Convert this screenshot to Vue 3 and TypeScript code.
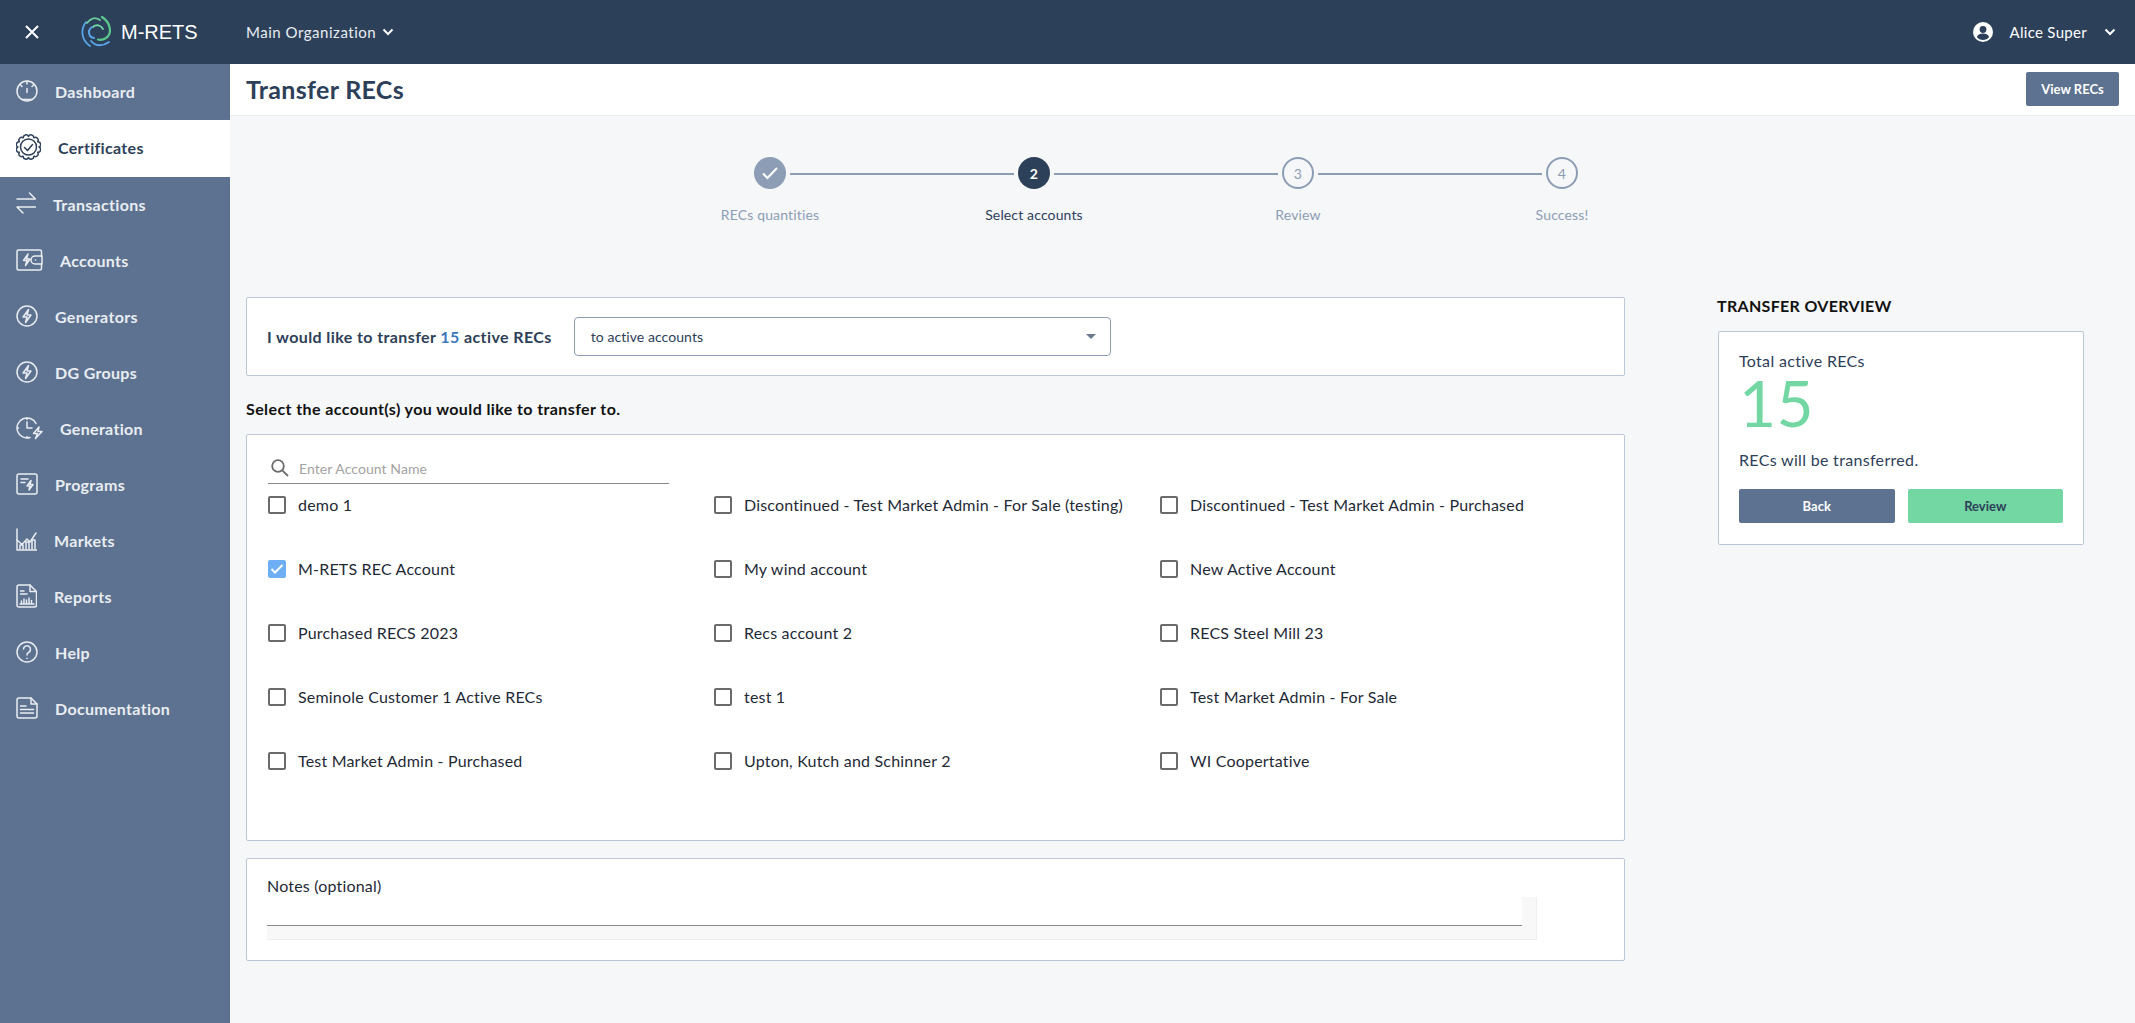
<template>
  <div class="app">
    <header class="topbar">
      <svg class="close" width="16" height="16" viewBox="0 0 16 16"><path d="M2 2 14 14M14 2 2 14" stroke="#fff" stroke-width="2" fill="none" /></svg>
      <div class="brand">
        <svg width="32" height="32" viewBox="0 0 32 32" fill="none" stroke-linecap="round">
          <path d="M6 7C10 2 15 1 19 4" stroke="#6fd6a0" stroke-width="1.800" />
          <path d="M21 1C29 6 32 17 25 22C22 24 19 24 17 23.500" stroke="#5cc98e" stroke-width="2.200" />
          <path d="M12 11C15 8 20 9 22 13" stroke="#6fd6a0" stroke-width="1.800" />
          <path d="M5 6C-0.500 13 0 24 9 30" stroke="#58a5e8" stroke-width="1.800" />
          <path d="M11 11C8 13 7 16 9 20C10 21 11 22 13 22" stroke="#58a5e8" stroke-width="2" />
          <path d="M10 25C14 30 21 31 28 26" stroke="#58a5e8" stroke-width="2" />
        </svg>
        <span class="brand-name">M-RETS</span>
      </div>
      <div class="org">Main Organization <svg class="chev" width="12" height="8" viewBox="0 0 12 8"><path d="M1.500 1.500 6 6l4.500-4.500" stroke="#fff" stroke-width="2" fill="none" /></svg></div>
      <div class="user">
        <svg width="20" height="20" viewBox="0 0 20 20"><circle cx="10" cy="10" r="10" fill="#fff" /><circle cx="10" cy="7.500" r="3.400" fill="#2d4059" /><path d="M3.800 15c1.200-2.400 3.600-3.400 6.200-3.400s5 1 6.200 3.400C14.700 17 12.500 18 10 18s-4.700-1-6.200-3z" fill="#2d4059" /></svg>
        <span>Alice Super</span>
        <svg class="chev" width="12" height="8" viewBox="0 0 12 8"><path d="M1.500 1.500 6 6l4.500-4.500" stroke="#fff" stroke-width="2" fill="none" /></svg>
      </div>
    </header>

    <div class="layout">
      <nav class="sidebar">
        <a v-for="item in navItems" :key="item.label" class="nav-item" :class="{ active: item.label === 'Certificates' }">
          <svg :width="item.w" height="26" :viewBox="`0 0 ${item.w} 26`" fill="none" stroke="currentColor" stroke-width="1.500" stroke-linecap="round" stroke-linejoin="round">
            <path v-for="d in item.paths" :key="d" :d="d" />
          </svg>
          <span>{{ item.label }}</span>
        </a>
      </nav>

      <main class="main">
        <div class="titlebar">
          <h1>Transfer RECs</h1>
          <button class="btn btn-slate view-btn">View RECs</button>
        </div>

        <ol class="steps">
          <li v-for="(step, i) in steps" :key="step" class="step" :class="stepClass(i)">
            <span class="bubble">
              <svg v-if="i === 0" width="18" height="14" viewBox="0 0 18 14"><path d="M2 7.500 6.500 12 16 2" stroke="#fff" stroke-width="2" fill="none" /></svg>
              <template v-else>{{ i + 1 }}</template>
            </span>
            <span class="step-label">{{ step }}</span>
          </li>
        </ol>

        <div class="columns">
          <section class="left">
            <div class="card transfer-row">
              <span class="lead">I would like to transfer <em>15</em> active RECs</span>
              <div class="select">
                <span>to active accounts</span>
                <i class="caret"></i>
              </div>
            </div>

            <h2 class="pick-title">Select the account(s) you would like to transfer to.</h2>

            <div class="card accounts">
              <div class="search">
                <svg width="20" height="20" viewBox="0 0 20 20" fill="none" stroke="#6b6b6b" stroke-width="1.800"><circle cx="8" cy="8" r="5.800" /><path d="M12.300 12.300 18 18" /></svg>
                <span>Enter Account Name</span>
              </div>
              <div class="account-grid">
                <label v-for="name in accounts" :key="name" class="account">
                  <span class="box" :class="{ checked: name === selected }">
                    <svg v-if="name === selected" width="14" height="12" viewBox="0 0 14 12"><path d="M1.500 6 5 9.500 12.500 2" stroke="#fff" stroke-width="2" fill="none" /></svg>
                  </span>
                  {{ name }}
                </label>
              </div>
            </div>

            <div class="card notes">
              <div class="notes-label">Notes (optional)</div>
              <div class="notes-field"><div class="notes-input"></div></div>
            </div>
          </section>

          <aside class="right">
            <h3>TRANSFER OVERVIEW</h3>
            <div class="card overview">
              <div class="ov-label">Total active RECs</div>
              <div class="ov-num">15</div>
              <div class="ov-note">RECs will be transferred.</div>
              <div class="ov-actions">
                <button class="btn btn-slate">Back</button>
                <button class="btn btn-green">Review</button>
              </div>
            </div>
          </aside>
        </div>
      </main>
    </div>
  </div>
</template>

<script setup lang="ts">
  type NavItem = { label: string; w: number; paths: string[] };

  // scalloped edge of the certificate badge
  function scallop(cx: number, cy: number, r: number, bumps: number): string {
    let d = "";
    for (let i = 0; i <= bumps; i++) {
      const a = (i / bumps) * Math.PI * 2;
      const x = (cx + r * Math.cos(a)).toFixed(2);
      const y = (cy + r * Math.sin(a)).toFixed(2);
      d += i === 0 ? `M${x} ${y}` : `A2.800 2.800 0 0 1 ${x} ${y}`;
    }
    return d + "Z";
  }

  const circle = "M21 13A10 10 0 1 1 1 13A10 10 0 1 1 21 13Z";

  const navItems: NavItem[] = [
    { label: "Dashboard", w: 22, paths: [circle, "M11 3V6M4 6.500 6 8.500M18 6.500 16 8.500M11 10.500V14.500M6 21.500H16"] },
    { label: "Certificates", w: 25, paths: [scallop(12.5, 13, 10.6, 12), "M20.500 13A8 8 0 1 1 4.500 13A8 8 0 1 1 20.500 13Z", "M8.500 13.500 11.500 16.500 16.500 10.500"] },
    { label: "Transactions", w: 20, paths: ["M1 8H19.500L13.500 2", "M19.500 16H1L7 22"] },
    { label: "Accounts", w: 27, paths: ["M25.500 9V4.500A1.500 1.500 0 0 0 24 3H2.500A1.500 1.500 0 0 0 1 4.500V21.500A1.500 1.500 0 0 0 2.500 23H24A1.500 1.500 0 0 0 25.500 21.500V17", "M26 9H19A4 4 0 0 0 19 17H26Z", "M12 7 7.500 13.500H11L9.500 18.500 14 12H10.500Z", "M19.500 13H19.600"] },
    { label: "Generators", w: 22, paths: [circle, "M12.500 6.500 7 14H11L9.500 19.500 15 12H11Z"] },
    { label: "DG Groups", w: 22, paths: [circle, "M12.500 6.500 7 14H11L9.500 19.500 15 12H11Z"] },
    { label: "Generation", w: 27, paths: ["M20 8.500A10 10 0 1 0 14 22.500M11 3V4.500M11 21.500V23M1 13H2.500M11 7V13H16", "M23 12 17.500 18.500H21.500L19.500 23.500 26 16.500H22Z"] },
    { label: "Programs", w: 22, paths: ["M3 3H19A2 2 0 0 1 21 5V21A2 2 0 0 1 19 23H3A2 2 0 0 1 1 21V5A2 2 0 0 1 3 3Z", "M5 8H12M5 11.500H9", "M15 9.500 11 15H14L13 19 17 13.500H14Z"] },
    { label: "Markets", w: 21, paths: ["M1 2V23H21", "M1 13 6 17.500 11 12 14 15 20 6", "M4 22V18H7V22M10 22V15H13V22M16 22V13H19V22"] },
    { label: "Reports", w: 21, paths: ["M3 2H14L20.500 8.500V22A2 2 0 0 1 18.500 24H3A2 2 0 0 1 1 22V4A2 2 0 0 1 3 2Z", "M14 2V8.500H20.500", "M4.500 8H8M4.500 11H11", "M4 21H18M5.500 21V18M8 21V16M10.500 21V17M13 21V15M15.500 21V17.500"] },
    { label: "Help", w: 22, paths: [circle, "M7.500 10A3.500 3.500 0 1 1 12.500 13.500C11.500 14 11 15 11 16", "M11 19.300V19.400"] },
    { label: "Documentation", w: 22, paths: ["M3 3H15L21 9V21A2 2 0 0 1 19 23H3A2 2 0 0 1 1 21V5A2 2 0 0 1 3 3Z", "M15 3V9H21", "M4.500 11H10M4.500 14.500H17.500M4.500 18H17.500"] },
  ];

  const steps = ["RECs quantities", "Select accounts", "Review", "Success!"];

  function stepClass(i: number) {
    if (i === 0) return "done";
    return i === 1 ? "current" : "todo";
  }

  const selected = "M-RETS REC Account";
  const accounts = [
    "demo 1",
    "Discontinued - Test Market Admin - For Sale (testing)",
    "Discontinued - Test Market Admin - Purchased",
    "M-RETS REC Account",
    "My wind account",
    "New Active Account",
    "Purchased RECS 2023",
    "Recs account 2",
    "RECS Steel Mill 23",
    "Seminole Customer 1 Active RECs",
    "test 1",
    "Test Market Admin - For Sale",
    "Test Market Admin - Purchased",
    "Upton, Kutch and Schinner 2",
    "WI Coopertative",
  ];
</script>

<style>
  html, body {
    margin: 0;
    background: #f6f7f9;
  }
</style>

<style scoped>
  .app {
    font-family: Lato, "Noto Sans", sans-serif;
    font-size: 16px;
    letter-spacing: 0.02em;
    color: #2d4059;
    height: 1023px;
    overflow: hidden;
  }

  .topbar {
    height: 64px;
    background: #2d4059;
    color: #fff;
    display: flex;
    align-items: center;
    padding-left: 24px;
  }

  .close {
    margin-right: 41px;
  }

  .brand {
    display: flex;
    align-items: center;
    gap: 8px;
    width: 165px;
  }

  .brand-name {
    font-family: "Liberation Sans", sans-serif;
    font-size: 20px;
    letter-spacing: 0;
  }

  .org {
    display: flex;
    align-items: center;
    gap: 6px;
    font-size: 15px;
    letter-spacing: 0.035em;
    color: #e8edf3;
  }

  .user {
    margin-left: auto;
    margin-right: 19px;
    display: flex;
    align-items: center;
    gap: 17px;
    font-size: 15px;
    letter-spacing: 0.02em;
  }

  .layout {
    display: flex;
    height: 959px;
  }

  .sidebar {
    width: 230px;
    flex: none;
    background: #5d7290;
  }

  .nav-item {
    height: 56px;
    box-sizing: border-box;
    padding: 0 0 2px 16px;
    display: flex;
    align-items: center;
    gap: 17px;
    color: #e9edf2;
    font-weight: 700;
    font-size: 16px;
  }

  .nav-item svg {
    flex: none;
    margin-top: -1px;
  }

  .nav-item.active {
    background: #fff;
    color: #2d4059;
    height: 57px;
  }

  .main {
    flex: 1;
    min-width: 0;
  }

  .titlebar {
    height: 52px;
    box-sizing: border-box;
    background: #fff;
    border-bottom: 1px solid #e8ebef;
    display: flex;
    align-items: center;
    justify-content: space-between;
    padding: 0 16px 2px;
  }

  h1 {
    margin: 0;
    font-size: 25px;
    font-weight: 700;
  }

  .btn {
    border: 0;
    border-radius: 2px;
    font: inherit;
    font-size: 13px;
    font-weight: 700;
    height: 34px;
  }

  .btn-slate {
    background: #5d7290;
    color: #fff;
  }

  .btn-green {
    background: #72d7a2;
    color: #2d4059;
  }

  .view-btn {
    width: 93px;
  }

  .steps {
    list-style: none;
    margin: 0 0 0 408px;
    padding: 41px 0 0;
    width: 1056px;
    height: 140px;
    box-sizing: content-box;
    display: grid;
    grid-template-columns: repeat(4, 1fr);
  }

  .step {
    position: relative;
    display: flex;
    flex-direction: column;
    align-items: center;
    gap: 17px;
    font-size: 14px;
    letter-spacing: 0.01em;
  }

  .step:not(:last-child)::after {
    content: "";
    position: absolute;
    top: 16px;
    left: calc(50% + 20px);
    width: 224px;
    height: 2px;
    background: #8c9db5;
  }

  .bubble {
    width: 32px;
    height: 32px;
    border-radius: 50%;
    box-sizing: border-box;
    display: flex;
    align-items: center;
    justify-content: center;
    font-size: 14px;
  }

  .done .bubble {
    background: #8c9db5;
  }

  .current .bubble {
    background: #2d4059;
    color: #fff;
    font-weight: 700;
  }

  .todo .bubble {
    border: 2px solid #8c9db5;
    color: #8c9db5;
  }

  .done .step-label,
  .todo .step-label {
    color: #8c9db5;
  }

  .columns {
    display: flex;
    padding-left: 16px;
    gap: 93px;
  }

  .left {
    width: 1379px;
    flex: none;
  }

  .card {
    background: #fff;
    border: 1px solid #bcc6d6;
    border-radius: 2px;
    box-sizing: border-box;
  }

  .transfer-row {
    height: 79px;
    display: flex;
    align-items: center;
    padding-left: 20px;
    gap: 22px;
  }

  .lead {
    font-weight: 700;
    letter-spacing: 0.025em;
  }

  .lead em {
    font-style: normal;
    color: #3b78bd;
  }

  .select {
    width: 537px;
    height: 39px;
    box-sizing: border-box;
    border: 1px solid #8c9db5;
    border-radius: 4px;
    display: flex;
    align-items: center;
    justify-content: space-between;
    padding: 0 14px 0 16px;
    font-size: 14px;
    letter-spacing: 0.005em;
  }

  .caret {
    width: 0;
    height: 0;
    border-left: 5px solid transparent;
    border-right: 5px solid transparent;
    border-top: 5px solid #6b7a8f;
  }

  .pick-title {
    margin: 23px 0 15px;
    font-size: 16px;
    line-height: 20px;
    font-weight: 700;
    letter-spacing: 0.025em;
    color: #111;
  }

  .accounts {
    height: 407px;
    padding: 20px 21px 0;
  }

  .search {
    width: 401px;
    height: 29px;
    border-bottom: 1px solid #8a8a8a;
    display: flex;
    align-items: center;
    gap: 9px;
    color: #a3a3a3;
    font-size: 14px;
    letter-spacing: 0.005em;
    padding: 0 0 2px 2px;
    box-sizing: border-box;
  }

  .account-grid {
    display: grid;
    grid-template-columns: repeat(3, 446px);
    grid-auto-rows: 64px;
    margin-top: 9px;
  }

  .account {
    display: flex;
    align-items: flex-start;
    gap: 12px;
    height: 24px;
    line-height: 24px;
    color: #1f2a37;
    font-size: 16px;
    letter-spacing: 0.012em;
  }

  .box {
    width: 18px;
    height: 18px;
    margin-top: 3px;
    box-sizing: border-box;
    border: 2px solid #6b6b6b;
    border-radius: 2px;
    flex: none;
    display: flex;
    align-items: center;
    justify-content: center;
  }

  .box.checked {
    background: #6eaef5;
    border-color: #6eaef5;
  }

  .notes {
    margin-top: 17px;
    height: 103px;
    padding: 16px 20px 0;
  }

  .notes-label {
    font-size: 16px;
    line-height: 22px;
    letter-spacing: 0.012em;
    color: #1f2a37;
  }

  .notes-field {
    width: 1270px;
    height: 43px;
    background: #f8f8f8;
    border-right: 1px solid #efefef;
    border-bottom: 1px solid #efefef;
    box-sizing: border-box;
  }

  .notes-input {
    width: 1255px;
    height: 28px;
    background: #fff;
    border-bottom: 1px solid #8a8a8a;
  }

  .right {
    width: 366px;
    flex: none;
  }

  .right h3 {
    margin: -4px 0 13px -1px;
    line-height: 25px;
    font-size: 16px;
    font-weight: 700;
    color: #111;
  }

  .overview {
    height: 214px;
    padding: 17px 20px 0;
  }

  .ov-label {
    line-height: 24px;
  }

  .ov-num {
    font-size: 64px;
    line-height: 60px;
    font-weight: 400;
    color: #72d7a2;
  }

  .ov-note {
    margin-top: 15px;
    line-height: 24px;
  }

  .ov-actions {
    display: flex;
    gap: 13px;
    margin-top: 17px;
  }

  .ov-actions .btn {
    width: 156px;
  }
</style>
